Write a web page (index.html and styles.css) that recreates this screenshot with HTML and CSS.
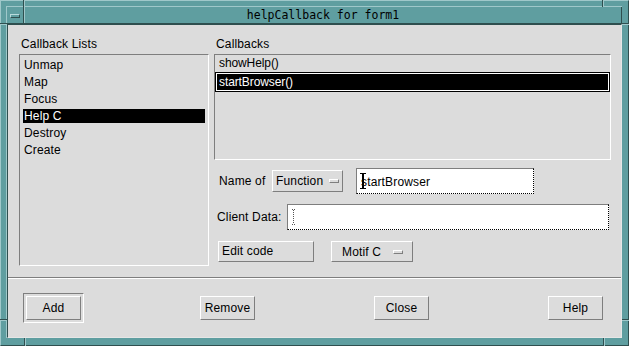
FILE: index.html
```html
<!DOCTYPE html>
<html lang="en">
<head>
  <meta charset="UTF-8" />
  <title>helpCallback for form1</title>
  <link rel="stylesheet" href="styles.css">
</head>
<body>
  <div class="window">
    <div class="frame-inner">
      <div class="titlebar">
        <div class="menu-btn"><span class="menu-bar"></span></div>
        <div class="title">helpCallback for form1</div>
      </div>

      <div class="client">
        <div class="main">
          <div class="col-left">
            <div class="label">Callback Lists</div>
            <ul class="list list-lists">
              <li>Unmap</li>
              <li>Map</li>
              <li>Focus</li>
              <li class="selected">Help C</li>
              <li>Destroy</li>
              <li>Create</li>
            </ul>
          </div>

          <div class="col-right">
            <div class="label">Callbacks</div>
            <ul class="list list-callbacks">
              <li>showHelp()</li>
              <li class="selected">startBrowser()</li>
            </ul>

            <div class="row row-name">
              <span class="row-label name-label">Name of</span>
              <div class="option option-function">
                <span>Function</span>
                <span class="indicator"></span>
              </div>
              <div class="field field-name">
                <svg class="caret" width="6" height="16" viewBox="0 0 6 16">
                  <rect x="0" y="0" width="6" height="1" fill="#000"/>
                  <rect x="2" y="0" width="2" height="16" fill="#000"/>
                  <rect x="0" y="15" width="6" height="1" fill="#000"/>
                </svg>
                <span class="field-text">startBrowser</span>
              </div>
            </div>

            <div class="row row-client">
              <span class="row-label client-label">Client Data:</span>
              <div class="field field-client">
                <svg class="caret" width="4" height="16" viewBox="0 0 4 16">
                  <path d="M0 0.5h1 M2 0.5h1 M1.5 1v14" stroke="#555" stroke-width="1" stroke-dasharray="1 1" fill="none"/>
                  <path d="M0 15.5h1 M2 15.5h1" stroke="#555" stroke-width="1" fill="none"/>
                </svg>
              </div>
            </div>

            <div class="row row-code">
              <div class="push edit-btn">Edit code</div>
              <div class="option option-motif">
                <span>Motif C</span>
                <span class="indicator"></span>
              </div>
            </div>
          </div>
        </div>

        <div class="separator"></div>

        <div class="buttons">
          <div class="default-ring"><div class="push action">Add</div></div>
          <div class="push action">Remove</div>
          <div class="push action">Close</div>
          <div class="push action">Help</div>
        </div>
      </div>
    </div>

    <!-- resize corner marks -->
    <span class="mark v tl"></span>
    <span class="mark h tl2"></span>
    <span class="mark v tr"></span>
    <span class="mark h tr2"></span>
    <span class="mark h bl"></span>
    <span class="mark v bl2"></span>
    <span class="mark h br"></span>
    <span class="mark v br2"></span>
  </div>
</body>
</html>
```

FILE: styles.css
```css
* {
  box-sizing: border-box;
  margin: 0;
  padding: 0;
}
body {
  font-family: 'Liberation Sans', Arial, sans-serif;
  font-size: 12px;
  color: #000;
  background: #5f9ea0;
}

/* window manager frame */
.window {
  position: relative;
  width: 629px;
  height: 346px;
  background: #5f9ea0;
  border: 1px solid;
  border-color: #9fc8ca #2f4f4f #2f4f4f #9fc8ca;
  padding: 5px 6px 7px 5px;
}
.frame-inner {
  height: 100%;
  display: flex;
  flex-direction: column;
  border-top: 1px solid #9fc8ca;
  border-left: 1px solid #9fc8ca;
}
.titlebar {
  display: flex;
  height: 17px;
  border-bottom: 1px solid #2f4f4f;
}
.menu-btn {
  width: 17px;
  border-right: 1px solid #2f4f4f;
  display: flex;
  align-items: center;
  justify-content: center;
}
.menu-bar {
  display: block;
  width: 10px;
  height: 4px;
  margin-top: 1px;
  border: 1px solid;
  border-color: #b8dadb #2f4f4f #2f4f4f #b8dadb;
}
.title {
  flex: 1;
  border-left: 1px solid #9fc8ca;
  border-right: 1px solid #2f4f4f;
  text-align: center;
  font-family: 'DejaVu Sans Mono', monospace;
  font-size: 11.5px;
  line-height: 16px;
}
.mark {
  position: absolute;
  display: block;
}
.mark.v {
  width: 2px;
  border-left: 1px solid #2f4f4f;
  border-right: 1px solid #9fc8ca;
}
.mark.h {
  height: 2px;
  border-top: 1px solid #2f4f4f;
  border-bottom: 1px solid #9fc8ca;
}
.mark.tl { left: 22px; top: -1px; height: 7px; }
.mark.tl2 { left: -1px; top: 22px; width: 7px; }
.mark.tr { left: 601px; top: -1px; height: 7px; }
.mark.tr2 { left: 621px; top: 22px; width: 7px; }
.mark.bl { left: -1px; top: 318px; width: 7px; }
.mark.bl2 { left: 23px; top: 337px; height: 8px; }
.mark.br { left: 621px; top: 318px; width: 7px; }
.mark.br2 { left: 602px; top: 337px; height: 8px; }

/* dialog client area */
.client {
  flex: 1;
  display: flex;
  flex-direction: column;
  background: #dcdcdc;
  border: 1px solid;
  border-color: #2f4f4f #e6e6e6 #e6e6e6 #2f4f4f;
  letter-spacing: 0.15px;
}
.main {
  display: flex;
  gap: 5px;
  padding: 12px 10px 0 11px;
}
.col-left {
  width: 190px;
}
.col-right {
  flex: 1;
}
.label {
  line-height: 14px;
  height: 14px;
  margin-bottom: 3px;
  padding-left: 2px;
}
.list {
  list-style: none;
  background: #dcdcdc;
  border: 1px solid;
  border-color: #7e7e7e #fff #fff #7e7e7e;
}
.list-lists {
  height: 212px;
  padding: 3px 3px 0 3px;
}
.list-lists li {
  height: 14px;
  line-height: 14px;
  margin-bottom: 3px;
  padding-left: 1px;
}
.list-callbacks {
  height: 106px;
}
.list-callbacks li {
  height: 17px;
  line-height: 17px;
  padding-left: 4px;
  letter-spacing: -0.1px;
}
.list-callbacks li.selected {
  height: 20px;
  line-height: 20px;
  outline: 1px solid #fff;
  outline-offset: -2px;
}
.list li.selected {
  background: #000;
  color: #fff;
}

/* form rows */
.row {
  display: flex;
  align-items: center;
}
.row-name {
  margin-top: 8px;
  padding-left: 5px;
}
.name-label {
  width: 53px;
}
.row-client {
  margin-top: 10px;
  padding-left: 3px;
  padding-right: 2px;
}
.client-label {
  width: 70px;
}
.row-code {
  margin-top: 11px;
  padding-left: 4px;
}
.option,
.push {
  background: #dcdcdc;
  border: 1px solid;
  border-color: #fff #7e7e7e #7e7e7e #fff;
}
.option {
  display: flex;
  align-items: center;
  justify-content: space-between;
  height: 22px;
  padding: 0 3px 0 3px;
}
.option-function {
  width: 71px;
}
.option-motif {
  width: 82px;
  height: 21px;
  margin-left: 17px;
  padding-left: 10px;
  padding-right: 9px;
}
.indicator {
  display: block;
  width: 10px;
  height: 4px;
  border: 1px solid;
  border-color: #fff #7e7e7e #7e7e7e #fff;
}
.field {
  display: flex;
  align-items: center;
  height: 26px;
  background: #fff;
  border-top: 1px solid #7e7e7e;
  border-left: 1px solid #7e7e7e;
  border-right: 1px dotted #000;
  border-bottom: 1px dotted #000;
  padding-left: 3px;
}
.field-name {
  width: 178px;
  margin-left: 13px;
}
.field-client {
  flex: 1;
}
.caret {
  display: block;
  flex-shrink: 0;
}
.field-name .caret {
  margin-right: -5px;
}
.field-client .caret {
  margin-left: 1px;
}
.field-text {
  padding-top: 2px;
}
.edit-btn {
  width: 96px;
  height: 21px;
  line-height: 19px;
  padding-left: 3px;
}

/* bottom action area */
.separator {
  margin-top: 11px;
  height: 2px;
  border-top: 1px solid #7e7e7e;
  border-bottom: 1px solid #fff;
}
.buttons {
  display: flex;
  align-items: center;
  gap: 119px;
  padding: 14px 0 0 15px;
}
.default-ring {
  margin-right: -3px;
  padding: 2px;
  border: 1px solid;
  border-color: #7e7e7e #fff #fff #7e7e7e;
}
.action {
  width: 55px;
  height: 24px;
  line-height: 22px;
  text-align: center;
}
```
